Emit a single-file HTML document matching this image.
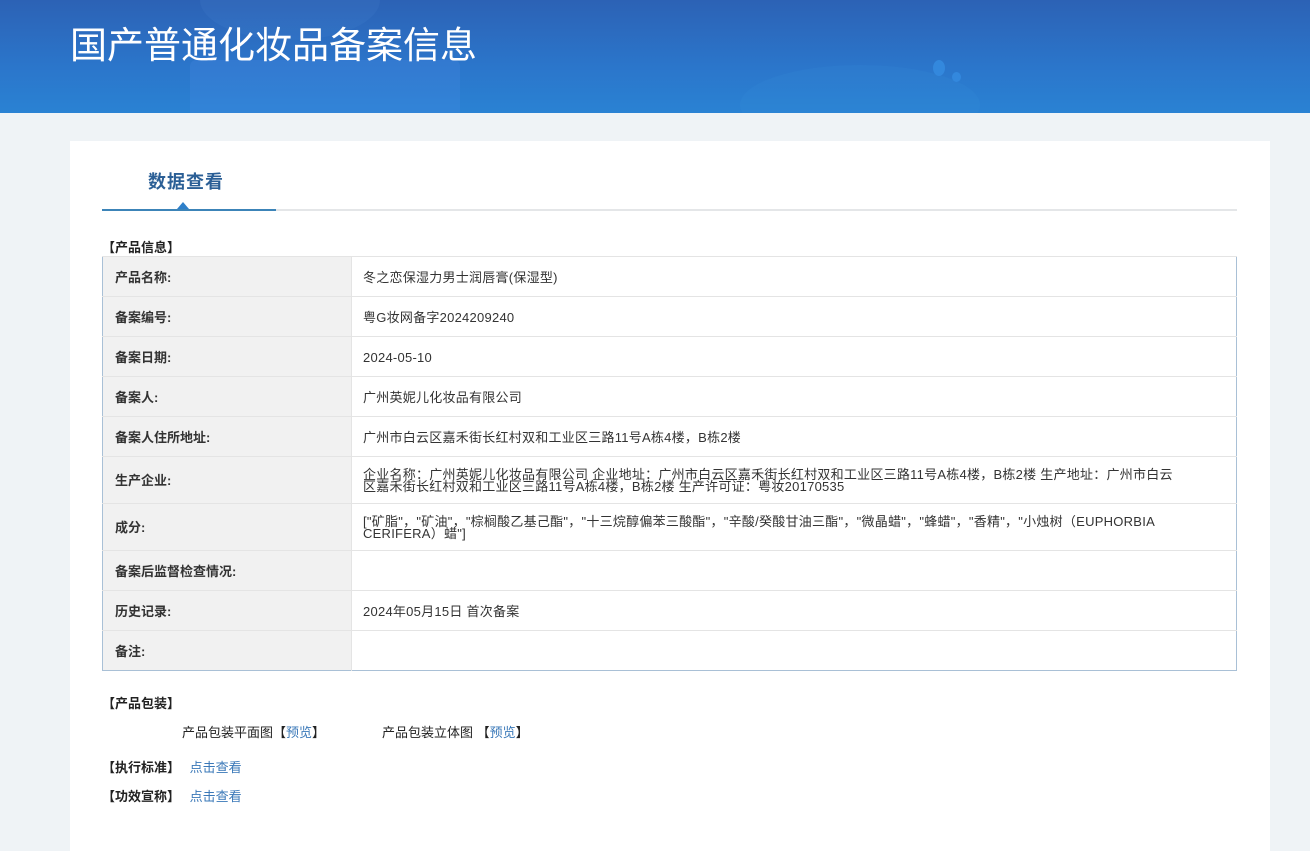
<!DOCTYPE html>
<html><head><meta charset="utf-8"><style>
*{margin:0;padding:0;box-sizing:border-box}
body{width:1310px;height:841px;overflow:hidden;background:#eff3f6;font-family:"Liberation Sans","Noto Sans CJK SC","Microsoft YaHei",sans-serif;color:#333;font-size:13px;position:relative}
.hd{position:absolute;left:0;top:0;width:1310px;height:113px;background:linear-gradient(180deg,#2c62b5 0%,#2b76cb 60%,#2a82d3 100%);overflow:hidden}
.hd .s1{position:absolute;left:190px;top:60px;width:270px;height:80px;background:rgba(80,140,230,.22);border-radius:6px}
.hd .s2{position:absolute;left:200px;top:-40px;width:180px;height:80px;background:rgba(90,150,220,.12);border-radius:50%}
.hd .s3{position:absolute;left:740px;top:65px;width:240px;height:80px;background:rgba(60,150,220,.15);border-radius:50%}
.hd .d1{position:absolute;left:933px;top:60px;width:12px;height:16px;border-radius:50%;background:#3388dd}
.hd .d2{position:absolute;left:952px;top:72px;width:9px;height:10px;border-radius:50%;background:#3388dd}
.hd h1{position:absolute;left:70px;top:15px;font-size:37px;font-weight:normal;color:#fff;font-family:"Noto Sans CJK SC",sans-serif}
.card{position:absolute;left:70px;top:141px;width:1200px;height:710px;background:#fff}
.tab{position:absolute;left:148px;top:168px;font-size:18px;font-weight:bold;color:#2b5f96;letter-spacing:1px;font-family:"Noto Sans CJK SC",sans-serif}
.ln{position:absolute;left:102px;top:209px;width:1135px;height:2px;background:#e4e6e8}
.ln2{position:absolute;left:102px;top:209px;width:174px;height:2px;background:#3c84b8}
.tri{position:absolute;left:177px;top:202px;width:0;height:0;border-left:6px solid transparent;border-right:6px solid transparent;border-bottom:7px solid #2e7fc9}
.sec{position:absolute;font-weight:bold;color:#222;font-size:13px}
table{position:absolute;left:102px;top:256px;width:1135px;border-collapse:collapse;border:1px solid #a9c0d6}
td{border-top:1px solid #e4e4e4;font-size:13px;vertical-align:middle;line-height:12px}
td.l{width:249px;background:#f1f1f1;font-weight:bold;color:#333;padding-left:12px;border-right:1px solid #e4e4e4;padding-top:2px}
td.v{padding-left:11px;color:#333;letter-spacing:0.25px;padding-top:2px}
a{color:#3a78b8;text-decoration:none}
.t{position:absolute;font-size:13px;color:#222}
</style></head><body>
<div class="hd"><div class="s2"></div><div class="s1"></div><div class="s3"></div><div class="d1"></div><div class="d2"></div><h1>国产普通化妆品备案信息</h1></div>
<div class="card"></div>
<div class="tab">数据查看</div>
<div class="ln"></div><div class="ln2"></div><div class="tri"></div>
<div class="sec" style="left:102px;top:237px">【产品信息】</div>
<table>
<tr style="height:40px"><td class="l">产品名称:</td><td class="v">冬之恋保湿力男士润唇膏(保湿型)</td></tr>
<tr style="height:40px"><td class="l">备案编号:</td><td class="v">粤G妆网备字2024209240</td></tr>
<tr style="height:40px"><td class="l">备案日期:</td><td class="v">2024-05-10</td></tr>
<tr style="height:40px"><td class="l">备案人:</td><td class="v">广州英妮儿化妆品有限公司</td></tr>
<tr style="height:40px"><td class="l">备案人住所地址:</td><td class="v">广州市白云区嘉禾街长红村双和工业区三路11号A栋4楼，B栋2楼</td></tr>
<tr style="height:47px"><td class="l">生产企业:</td><td class="v">企业名称：广州英妮儿化妆品有限公司 企业地址：广州市白云区嘉禾街长红村双和工业区三路11号A栋4楼，B栋2楼 生产地址：广州市白云<br>区嘉禾街长红村双和工业区三路11号A栋4楼，B栋2楼 生产许可证：粤妆20170535</td></tr>
<tr style="height:47px"><td class="l">成分:</td><td class="v">["矿脂"，"矿油"，"棕榈酸乙基己酯"，"十三烷醇偏苯三酸酯"，"辛酸/癸酸甘油三酯"，"微晶蜡"，"蜂蜡"，"香精"，"小烛树（EUPHORBIA<br>CERIFERA）蜡"]</td></tr>
<tr style="height:40px"><td class="l">备案后监督检查情况:</td><td class="v"></td></tr>
<tr style="height:40px"><td class="l">历史记录:</td><td class="v">2024年05月15日 首次备案</td></tr>
<tr style="height:40px"><td class="l">备注:</td><td class="v"></td></tr>
</table>
<div class="sec" style="left:102px;top:693px">【产品包装】</div>
<div class="t" style="left:182px;top:722px">产品包装平面图【<a>预览</a>】</div>
<div class="t" style="left:382px;top:722px">产品包装立体图 【<a>预览</a>】</div>
<div class="sec" style="left:102px;top:757px">【执行标准】 <a style="font-weight:normal;margin-left:6px">点击查看</a></div>
<div class="sec" style="left:102px;top:786px">【功效宣称】 <a style="font-weight:normal;margin-left:6px">点击查看</a></div>
</body></html>
